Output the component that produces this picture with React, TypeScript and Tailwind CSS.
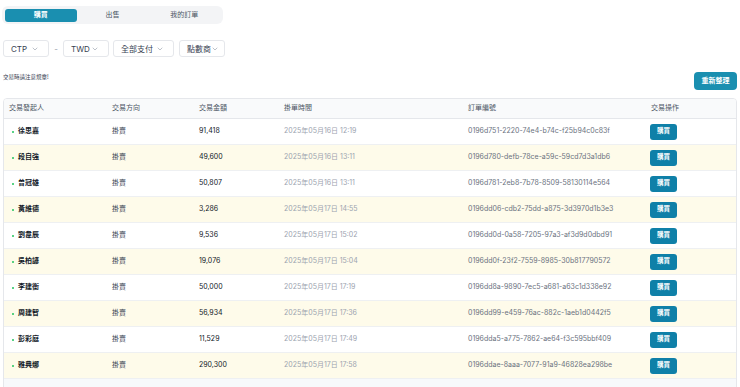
import React from 'react';
import { ChevronDown } from 'lucide-react';

const rows = [
  { name: '徐思嘉', amount: '91,418', time: '2025年05月16日 12:19', id: '0196d751-2220-74e4-b74c-f25b94c0c83f' },
  { name: '段自強', amount: '49,600', time: '2025年05月16日 13:11', id: '0196d780-defb-78ce-a59c-59cd7d3a1db6' },
  { name: '曾冠雄', amount: '50,807', time: '2025年05月16日 13:11', id: '0196d781-2eb8-7b78-8509-58130114e564' },
  { name: '黃維德', amount: '3,286', time: '2025年05月17日 14:55', id: '0196dd06-cdb2-75dd-a875-3d3970d1b3e3' },
  { name: '劉韋辰', amount: '9,536', time: '2025年05月17日 15:02', id: '0196dd0d-0a58-7205-97a3-af3d9d0dbd91' },
  { name: '吳柏諺', amount: '19,076', time: '2025年05月17日 15:04', id: '0196dd0f-23f2-7559-8985-30b817790572' },
  { name: '李建衡', amount: '50,000', time: '2025年05月17日 17:19', id: '0196dd8a-9890-7ec5-a681-a63c1d338e92' },
  { name: '周建智', amount: '56,934', time: '2025年05月17日 17:36', id: '0196dd99-e459-76ac-882c-1aeb1d0442f5' },
  { name: '彭彩庭', amount: '11,529', time: '2025年05月17日 17:49', id: '0196dda5-a775-7862-ae64-f3c595bbf409' },
  { name: '雅典娜', amount: '290,300', time: '2025年05月17日 17:58', id: '0196ddae-8aaa-7077-91a9-46828ea298be' },
];

const grid = 'grid grid-cols-[103px_87px_85px_184px_183px_1fr] pl-[5px]';

function Select({ label, width }: { label: string; width: string }) {
  return (
    <div className={`${width} h-[17px] flex items-center justify-between pl-[7px] pr-[9px] border border-[#e5e7eb] rounded-[3px] bg-white text-[8px] text-[#374151] whitespace-nowrap`}>
      <span>{label}</span>
      <ChevronDown className="w-[8px] h-[8px] shrink-0 text-[#9ca3af]" strokeWidth={2} />
    </div>
  );
}

export default function App() {
  return (
    <div className="w-[740px] h-[387px] overflow-hidden bg-white" style={{ fontFamily: 'Inter, "Noto Sans CJK TC", sans-serif' }}>
      <div className="pt-[6px] pl-[2px]">
        <div className="w-[221px] h-[18px] rounded-[6px] bg-[#f3f4f6] flex items-center px-[3px] text-[7px]">
          <div className="w-[72px] h-[13px] rounded-[3px] bg-[#1a8fb0] text-white font-semibold flex items-center justify-center">購買</div>
          <div className="w-[72px] text-center text-[#4b5563]">出售</div>
          <div className="w-[72px] text-center text-[#4b5563]">我的訂單</div>
        </div>
      </div>

      <div className="mt-[16px] pl-[3px] flex items-center">
        <Select label="CTP" width="w-[46px]" />
        <span className="w-[14px] text-center text-[8px] text-[#9ca3af]">-</span>
        <Select label="TWD" width="w-[46px]" />
        <div className="w-[4px]" />
        <Select label="全部支付" width="w-[61px]" />
        <div className="w-[5px]" />
        <Select label="點數商" width="w-[46px]" />
      </div>

      <div className="mt-[15px] pl-[3px] pr-[3px] flex justify-between items-start">
        <span className="mt-[1px] text-[5.5px] text-[#374151]">交易時請注意規章!</span>
        <button className="w-[43px] h-[18px] rounded-[4px] bg-[#1a8fb0] text-white text-[7px] font-semibold">重新整理</button>
      </div>

      <div className="mt-[8px] mx-[3px] border border-[#e5e7eb] rounded-[4px] overflow-hidden">
        <div className={`${grid} h-[20px] items-center bg-[#f9fafb] border-b border-[#e5e7eb] text-[7px] text-[#4b5563]`}>
          <span>交易發起人</span>
          <span>交易方向</span>
          <span>交易金額</span>
          <span>掛單時間</span>
          <span>訂單編號</span>
          <span>交易操作</span>
        </div>
        {rows.map((r, i) => (
          <div
            key={r.id}
            className={`${grid} h-[26px] items-center border-b border-[#eef0f2] text-[7px] ${i % 2 === 1 ? 'bg-[#fefbea]' : 'bg-white'}`}
          >
            <span className="flex items-center gap-[4px] font-bold text-[#111827]">
              <span className="ml-[3px] w-[2px] h-[2px] rounded-full bg-[#22c55e]" />
              {r.name}
            </span>
            <span className="text-[#374151]">掛賣</span>
            <span className="text-[#111827]">{r.amount}</span>
            <span className="text-[#9ca3af]">{r.time}</span>
            <span className="text-[#6b7280]">{r.id}</span>
            <span>
              <button className="w-[27px] h-[16px] -ml-[1px] rounded-[3px] bg-[#0f80a8] text-white text-[6.5px] font-bold">購買</button>
            </span>
          </div>
        ))}
        <div className="h-[20px] bg-[#f7f9fb]" />
      </div>
    </div>
  );
}
